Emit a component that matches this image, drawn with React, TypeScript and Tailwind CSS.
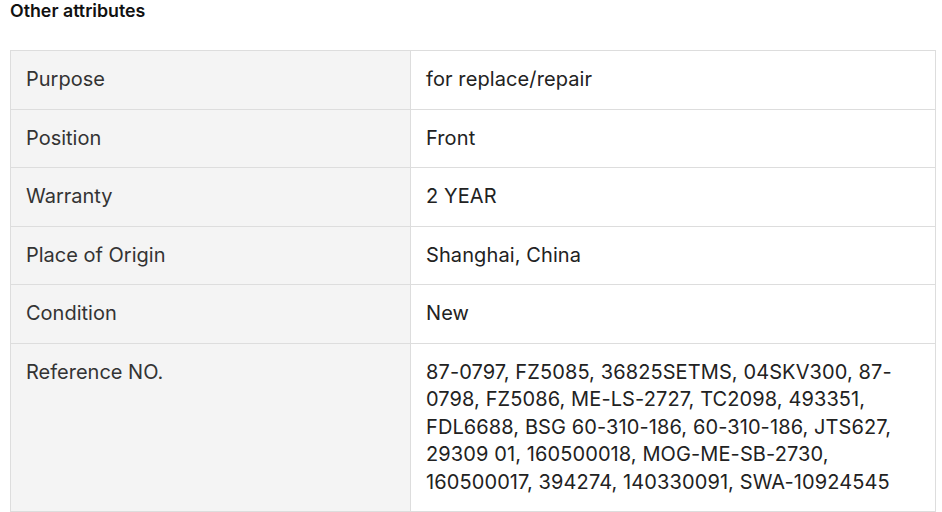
import React from "react";

const rows = [
  { label: "Purpose", value: "for replace/repair" },
  { label: "Position", value: "Front" },
  { label: "Warranty", value: "2 YEAR" },
  { label: "Place of Origin", value: "Shanghai, China" },
  { label: "Condition", value: "New" },
  {
    label: "Reference NO.",
    value:
      "87-0797, FZ5085, 36825SETMS, 04SKV300, 87-0798, FZ5086, ME-LS-2727, TC2098, 493351, FDL6688, BSG 60-310-186, 60-310-186, JTS627, 29309 01, 160500018, MOG-ME-SB-2730, 160500017, 394274, 140330091, SWA-10924545",
  },
];

export default function App() {
  return (
    <div className="w-[942px] h-[512px] overflow-hidden bg-white font-['Inter',sans-serif] text-[#222]">
      {/* titulo */}
      <h2 className="pl-[10px] pt-0 text-[17.8px] leading-[22px] font-semibold text-[#111]">
        Other attributes
      </h2>

      <div className="pl-[10px] pr-[6px] pt-[28px]">
        <table className="w-full border-collapse">
          <tbody>
            {rows.map((row, index) => (
              <tr key={index}>
                <td className="w-[400px] border border-[#dddddd] bg-[#f4f4f4] pl-[15px] pr-4 py-[15px] align-top text-[20px] leading-[27.5px] text-[#333]">
                  {row.label}
                </td>
                <td className="border border-[#dddddd] pl-[15px] pr-4 py-[15px] align-top text-[20px] leading-[27.5px] tracking-[0.1px] text-[#222]">
                  {row.value}
                </td>
              </tr>
            ))}
          </tbody>
        </table>
      </div>
    </div>
  );
}
